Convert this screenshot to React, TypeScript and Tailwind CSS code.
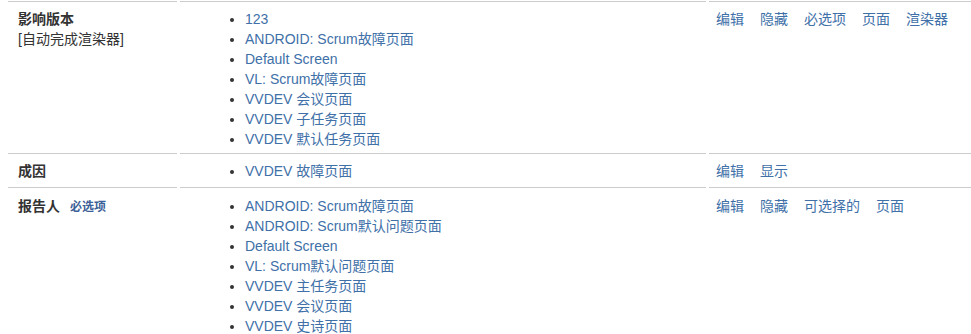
const rows = [
  {
    label: '影响版本',
    sub: '[自动完成渲染器]',
    required: false,
    screens: [
      '123',
      'ANDROID: Scrum故障页面',
      'Default Screen',
      'VL: Scrum故障页面',
      'VVDEV 会议页面',
      'VVDEV 子任务页面',
      'VVDEV 默认任务页面',
    ],
    actions: ['编辑', '隐藏', '必选项', '页面', '渲染器'],
    pad: 'pt-[7px] pb-[4px]',
  },
  {
    label: '成因',
    required: false,
    screens: ['VVDEV 故障页面'],
    actions: ['编辑', '显示'],
    pad: 'pt-[7px] pb-[6px]',
  },
  {
    label: '报告人',
    required: true,
    screens: [
      'ANDROID: Scrum故障页面',
      'ANDROID: Scrum默认问题页面',
      'Default Screen',
      'VL: Scrum默认问题页面',
      'VVDEV 主任务页面',
      'VVDEV 会议页面',
      'VVDEV 史诗页面',
    ],
    actions: ['编辑', '隐藏', '可选择的', '页面'],
    pad: 'pt-[8px] pb-[6px]',
  },
]

export default function App() {
  return (
    <div
      className="w-[971px] h-[334px] overflow-hidden bg-white pl-[8px] pt-px text-[14px] leading-[20px] text-[#333]"
      style={{ fontFamily: '"Liberation Sans", Arial, "Noto Sans CJK SC", sans-serif' }}
    >
      {rows.map((row) => (
        <div key={row.label} className="grid grid-cols-[169px_526px_1fr] gap-x-[3px]">
          {/* field name */}
          <div className={`border-t border-[#ccc] px-[10px] ${row.pad}`}>
            <div className="flex items-baseline">
              <span className="font-bold">{row.label}</span>
              {row.required && (
                <span className="ml-[10px] text-[12px] font-bold text-[#3b5f97]">必选项</span>
              )}
            </div>
            {row.sub && <div>{row.sub}</div>}
          </div>

          {/* screens */}
          <div className={`border-t border-[#ccc] ${row.pad}`}>
            <ul className="list-disc pl-[65px] marker:text-[#333]">
              {row.screens.map((s) => (
                <li key={s} className="text-[#4070a8]">
                  {s}
                </li>
              ))}
            </ul>
          </div>

          {/* operations */}
          <div className={`border-t border-[#ccc] pl-[7px] ${row.pad}`}>
            <div className="flex gap-[16px] text-[#4070a8]">
              {row.actions.map((a) => (
                <span key={a}>{a}</span>
              ))}
            </div>
          </div>
        </div>
      ))}
    </div>
  )
}
